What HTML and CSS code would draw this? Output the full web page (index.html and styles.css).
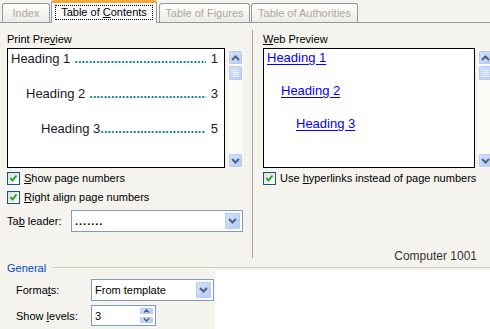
FILE: index.html
```html
<!DOCTYPE html>
<html lang="en">
<head>
    <meta charset="UTF-8">
    <title>Index and Tables</title>
    <link rel="stylesheet" href="styles.css">
</head>
<body>
    <div class="dialog">
        <div class="tabs">
            <div class="tab tab-index">Index</div>
            <div class="tab tab-toc active"><span class="focus">Table of <u>C</u>ontents</span></div>
            <div class="tab tab-tof">Table of Figures</div>
            <div class="tab tab-toa">Table of Authorities</div>
        </div>

        <div class="page">
            <!-- 印刷プレビュー -->
            <div class="col col-left">
                <div class="caption">Print Pre<u>v</u>iew</div>
                <div class="preview-row">
                    <div class="preview toc">
                        <div class="toc-row lvl1"><span>Heading 1</span><span class="leader"></span><span>1</span></div>
                        <div class="toc-row lvl2"><span>Heading 2</span><span class="leader"></span><span>3</span></div>
                        <div class="toc-row lvl3"><span>Heading 3</span><span class="leader"></span><span>5</span></div>
                    </div>
                    <div class="scrollbar">
                        <div class="sb-btn"><svg width="9" height="6" viewBox="0 0 9 6"><polyline points="1,5 4.5,1.5 8,5" fill="none" stroke="#4d6185" stroke-width="2"/></svg></div>
                        <div class="sb-thumb"><i></i><i></i><i></i><i></i></div>
                        <div class="sb-track"></div>
                        <div class="sb-btn"><svg width="9" height="6" viewBox="0 0 9 6"><polyline points="1,1 4.5,4.5 8,1" fill="none" stroke="#4d6185" stroke-width="2"/></svg></div>
                    </div>
                </div>
                <div class="check first">
                    <span class="box"><svg width="9" height="9" viewBox="0 0 9 9"><polyline points="1.5,4 3.5,6.5 7.5,1.5" fill="none" stroke="#21a121" stroke-width="2"/></svg></span>
                    <span><u>S</u>how page numbers</span>
                </div>
                <div class="check">
                    <span class="box"><svg width="9" height="9" viewBox="0 0 9 9"><polyline points="1.5,4 3.5,6.5 7.5,1.5" fill="none" stroke="#21a121" stroke-width="2"/></svg></span>
                    <span><u>R</u>ight align page numbers</span>
                </div>
                <div class="field">
                    <span class="field-label">Ta<u>b</u> leader:</span>
                    <div class="select leader-select">
                        <span class="select-text dots">.......</span>
                        <span class="drop"><svg width="9" height="6" viewBox="0 0 9 6"><polyline points="1,1 4.5,4.5 8,1" fill="none" stroke="#4d6185" stroke-width="2"/></svg></span>
                    </div>
                </div>
            </div>

            <!-- Webプレビュー -->
            <div class="col col-right">
                <div class="caption"><u>W</u>eb Preview</div>
                <div class="preview-row">
                    <div class="preview web">
                        <div class="web-row lvl1"><a href="#">Heading 1</a></div>
                        <div class="web-row lvl2"><a href="#">Heading 2</a></div>
                        <div class="web-row lvl3"><a href="#">Heading 3</a></div>
                    </div>
                    <div class="scrollbar">
                        <div class="sb-btn"><svg width="9" height="6" viewBox="0 0 9 6"><polyline points="1,5 4.5,1.5 8,5" fill="none" stroke="#4d6185" stroke-width="2"/></svg></div>
                        <div class="sb-thumb"><i></i><i></i><i></i><i></i></div>
                        <div class="sb-track"></div>
                        <div class="sb-btn"><svg width="9" height="6" viewBox="0 0 9 6"><polyline points="1,1 4.5,4.5 8,1" fill="none" stroke="#4d6185" stroke-width="2"/></svg></div>
                    </div>
                </div>
                <div class="check first">
                    <span class="box"><svg width="9" height="9" viewBox="0 0 9 9"><polyline points="1.5,4 3.5,6.5 7.5,1.5" fill="none" stroke="#21a121" stroke-width="2"/></svg></span>
                    <span>Use <u>h</u>yperlinks instead of page numbers</span>
                </div>
                <div class="brand">Computer 1001</div>
            </div>
        </div>

        <!-- 全般 -->
        <div class="general">
            <div class="general-head">
                <span class="general-title">General</span>
                <span class="general-line"></span>
            </div>
            <div class="general-form">
                <div class="gen-row">
                    <span class="gen-label">Forma<u>t</u>s:</span>
                    <div class="select formats-select">
                        <span class="select-text">From template</span>
                        <span class="drop"><svg width="9" height="6" viewBox="0 0 9 6"><polyline points="1,1 4.5,4.5 8,1" fill="none" stroke="#4d6185" stroke-width="2"/></svg></span>
                    </div>
                </div>
                <div class="gen-row">
                    <span class="gen-label">Show <u>l</u>evels:</span>
                    <div class="spin">
                        <span class="select-text">3</span>
                        <span class="spin-btns">
                            <span class="spin-btn"><svg width="7" height="4" viewBox="0 0 7 4"><polyline points="1,3.5 3.5,1 6,3.5" fill="none" stroke="#4d6185" stroke-width="1.5"/></svg></span>
                            <span class="spin-btn"><svg width="7" height="4" viewBox="0 0 7 4"><polyline points="1,0.5 3.5,3 6,0.5" fill="none" stroke="#4d6185" stroke-width="1.5"/></svg></span>
                        </span>
                    </div>
                </div>
            </div>
            <div class="general-blank"></div>
        </div>
    </div>
</body>
</html>
```

FILE: styles.css
```css
/* 全体 */
body {
    margin: 0;
    font-family: 'Liberation Sans', Arial, sans-serif;
    font-size: 11px;
    color: #000;
    background-color: #f4f3ee;
}

.dialog {
    width: 490px;
    height: 329px;
    overflow: hidden;
}

u {
    text-decoration: underline;
    text-underline-offset: 1px;
}

/* タブ */
.tabs {
    display: flex;
    align-items: flex-end;
    height: 22px;
    padding-left: 2px;
    border-bottom: 1px solid #919b9c;
}

.tab {
    box-sizing: border-box;
    height: 19px;
    margin-right: 1px;
    border: 1px solid #919b9c;
    border-bottom: none;
    border-radius: 3px 3px 0 0;
    background: linear-gradient(#fefefe, #ecebe6);
    color: #aca899;
    line-height: 18px;
    text-align: center;
    flex-shrink: 0;
}

.tab-index { width: 48px; }
.tab-toc { width: 106px; }
.tab-tof { width: 91px; margin-left: 1px; }
.tab-toa { width: 107px; }

.tab.active {
    height: 23px;
    margin-bottom: -1px;
    border-top: 3px solid #f5a93a;
    border-radius: 3px 3px 0 0;
    background: #fcfcfe;
    color: #000;
    line-height: 18px;
}

.focus {
    display: inline-block;
    padding: 0 5px;
    line-height: 13px;
    border: 1px dotted #000;
}

/* ページ */
.page {
    display: grid;
    grid-template-columns: 252px 1fr;
    height: 239px;
}

.col-left {
    padding: 9px 0 0 7px;
}

.col-right {
    display: flex;
    flex-direction: column;
    margin: 7px 0 4px;
    padding: 2px 0 0 10px;
    border-left: 1px solid #aca899;
    min-width: 0;
}

.caption {
    height: 14px;
    line-height: 14px;
    margin-bottom: 2px;
}

.preview-row {
    display: flex;
    gap: 3px;
    height: 120px;
}

.preview {
    box-sizing: border-box;
    height: 120px;
    border: 1px solid #000;
    background: #fff;
    font-size: 13px;
    flex-shrink: 0;
}

.toc {
    width: 218px;
    padding: 1px 6px 0 3px;
}

.toc-row {
    display: flex;
    height: 35px;
    line-height: 17px;
    color: #1a1a2a;
}

.toc-row.lvl2 { padding-left: 15px; }
.toc-row.lvl3 { padding-left: 30px; }

.leader {
    flex: 1;
    overflow: hidden;
    white-space: nowrap;
    color: #0b7c93;
    font-weight: bold;
    margin: 0 5px 0 4px;
}

.leader::before {
    content: '..........................................................................';
}

.toc-row.lvl3 .leader { margin-left: 0; }

.web {
    width: 212px;
    padding: 0 0 0 3px;
}

.web-row {
    height: 33px;
    line-height: 17px;
}

.web-row.lvl2 { padding-left: 14px; }
.web-row.lvl3 { padding-left: 29px; }

.web-row a {
    color: #0000ff;
    text-decoration: underline;
    text-underline-offset: 2px;
}

/* スクロールバー */
.scrollbar {
    display: flex;
    flex-direction: column;
    width: 15px;
    margin-top: 2px;
    background: #fafaf6;
    flex-shrink: 0;
}

.sb-btn,
.sb-thumb,
.drop,
.spin-btn {
    box-sizing: border-box;
    display: flex;
    align-items: center;
    justify-content: center;
    border: 1px solid #fff;
    border-radius: 2px;
    background: linear-gradient(135deg, #d8e4fd, #b5c9f6);
    box-shadow: inset 0 0 0 1px #b9cbf3;
}

.sb-btn {
    height: 15px;
}

.sb-thumb {
    flex-direction: column;
    gap: 1px;
    height: 16px;
}

.sb-thumb i {
    display: block;
    width: 6px;
    height: 1px;
    background: #eef4fe;
}

.sb-track {
    flex: 1;
}

/* チェックボックス */
.check {
    display: flex;
    align-items: flex-start;
    gap: 4px;
    height: 19px;
}

.check span:last-child {
    line-height: 13px;
}

.check.first {
    margin-top: 4px;
}

.box {
    box-sizing: border-box;
    display: flex;
    align-items: center;
    justify-content: center;
    width: 13px;
    height: 13px;
    border: 1px solid #1c5180;
    background: linear-gradient(135deg, #dcdcd7, #fff);
}

/* セレクト */
.field {
    display: flex;
    align-items: center;
}

.field-label {
    width: 64px;
}

.select,
.spin {
    box-sizing: border-box;
    display: flex;
    align-items: center;
    height: 22px;
    border: 1px solid #7f9db9;
    background: #fff;
}

.leader-select {
    width: 172px;
}

.select-text {
    flex: 1;
    padding-left: 3px;
}

.select-text.dots {
    color: #000;
    font-weight: bold;
    letter-spacing: 1px;
}

.drop {
    width: 17px;
    height: 18px;
    margin: 1px;
}

.brand {
    margin-top: auto;
    margin-bottom: -5px;
    padding-right: 13px;
    align-self: flex-end;
    font-size: 12px;
    line-height: 14px;
    color: #333;
}

/* 全般 */
.general {
    display: grid;
    grid-template-columns: 215px 1fr;
    grid-template-rows: 8px 1fr;
    height: 67px;
}

.general-head {
    grid-column: 1 / 3;
    display: flex;
    align-items: flex-start;
    padding-left: 7px;
}

.general-title {
    height: 12px;
    line-height: 12px;
    color: #0046d5;
}

.general-line {
    flex: 1;
    margin: 5px 0 0 6px;
    border-top: 1px solid #d0d0bf;
}

.general-form {
    display: flex;
    flex-direction: column;
    gap: 4px;
    padding: 9px 0 0 16px;
}

.general-blank {
    background: #fff;
}

.gen-row {
    display: flex;
    align-items: center;
}

.gen-label {
    width: 75px;
}

.formats-select {
    width: 123px;
}

.spin {
    width: 65px;
    height: 21px;
}

.spin-btns {
    display: flex;
    flex-direction: column;
    gap: 1px;
    margin: 1px;
}

.spin-btn {
    width: 15px;
    height: 8px;
}
```
